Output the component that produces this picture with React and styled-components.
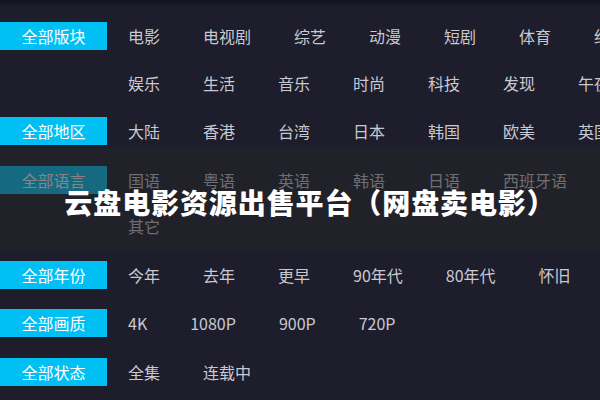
import React from 'react'
import styled, { createGlobalStyle } from 'styled-components'

const GlobalStyle = createGlobalStyle`
    html, body {
        margin: 0;
        padding: 0;
        background: #1d1d2c;
    }
    body {
        width: 600px;
        height: 400px;
        overflow: hidden;
        font-family: "Noto Sans CJK SC", "Noto Sans", sans-serif;
    }
`

const Page = styled.div`
    position: relative;
    width: 600px;
    height: 400px;
    overflow: hidden;
    box-sizing: border-box;
    padding-top: 22px;
    display: flex;
    flex-direction: column;
    gap: 20.5px;
    background: linear-gradient(to bottom, #13131c 0px, #1a1a28 5px, #1d1d2c 9px);
`

const Group = styled.div`
    display: flex;
    align-items: flex-start;
`

const Label = styled.div`
    flex-shrink: 0;
    width: 107px;
    height: 28px;
    line-height: 28px;
    background: #00bff3;
    color: #ffffff;
    font-size: 16px;
    text-align: center;
`

const Lines = styled.div`
    margin-left: 21px;
    display: flex;
    flex-direction: column;
    gap: 18.5px;
`

const Line = styled.div`
    display: flex;
    gap: 43px;
    white-space: nowrap;
`

const Item = styled.span`
    height: 28px;
    line-height: 28px;
    font-size: 16px;
    color: #c9c9d2;
    cursor: pointer;
`

const Overlay = styled.div`
    position: absolute;
    left: 0;
    right: 0;
    top: 147px;
    height: 105px;
    background: rgba(38, 38, 40, 0.56);
    display: flex;
    align-items: center;
    justify-content: center;
    padding: 4px 0 0 20px;
    box-sizing: border-box;
`

const Title = styled.h1`
    margin: 0;
    font-size: 28px;
    line-height: 34px;
    font-weight: 900;
    color: #ffffff;
    letter-spacing: 0.9px;
    white-space: nowrap;
`

const groups = [
    {
        label: '全部版块',
        lines: [
            ['电影', '电视剧', '综艺', '动漫', '短剧', '体育', '纪录片'],
            ['娱乐', '生活', '音乐', '时尚', '科技', '发现', '午夜'],
        ],
    },
    { label: '全部地区', lines: [['大陆', '香港', '台湾', '日本', '韩国', '欧美', '英国']] },
    {
        label: '全部语言',
        lines: [
            ['国语', '粤语', '英语', '韩语', '日语', '西班牙语'],
            ['其它'],
        ],
    },
    { label: '全部年份', lines: [['今年', '去年', '更早', '90年代', '80年代', '怀旧']] },
    { label: '全部画质', lines: [['4K', '1080P', '900P', '720P']] },
    { label: '全部状态', lines: [['全集', '连载中']] },
]

const App = () => {
    return (
        <>
            <GlobalStyle />
            <Page>
                {groups.map(group => (
                    <Group key={group.label}>
                        <Label>{group.label}</Label>
                        <Lines>
                            {group.lines.map((line, i) => (
                                <Line key={i}>
                                    {line.map(item => <Item key={item}>{item}</Item>)}
                                </Line>
                            ))}
                        </Lines>
                    </Group>
                ))}
                <Overlay>
                    <Title>云盘电影资源出售平台（网盘卖电影）</Title>
                </Overlay>
            </Page>
        </>
    )
}

export default App
